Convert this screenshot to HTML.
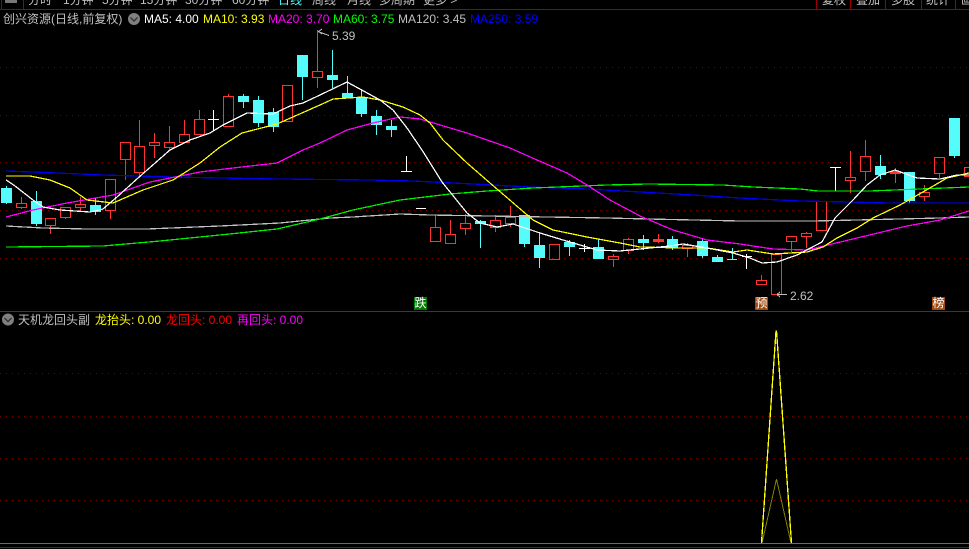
<!DOCTYPE html>
<html lang="zh"><head><meta charset="utf-8"><title>创兴资源</title>
<style>
html,body{margin:0;padding:0;background:#000;width:969px;height:549px;overflow:hidden}
#w{position:relative;width:969px;height:549px;overflow:hidden;background:#000;font:12px/14px "Liberation Sans","WenQuanYi Zen Hei","Noto Sans CJK SC",sans-serif;color:#c0c0c0}
#w span{position:absolute;white-space:nowrap}
.tb{top:-7px}
.r1{top:12px}
.r2{top:313px}
.m{width:13px;height:13px;line-height:13px;text-align:center;color:#fff;top:297px}
svg{position:absolute;left:0;top:0}
</style></head><body><div id="w">
<svg width="969" height="549" viewBox="0 0 969 549" fill="none" shape-rendering="crispEdges">
<g stroke="#a00000"><path d="M0 9.5H969M1.5 0V9M23.5 0V9M816.5 0V9M850.5 0V9M885.5 0V9M921.5 0V9M955.5 0V9"/></g>
<path d="M0 311.5H969" stroke="#c00000"/>
<path d="M0 547.5H969" stroke="#a00000"/>
<g stroke="#7a0000" stroke-dasharray="1 5"><path d="M0 67.5H969M0 115.5H969M0 162.5H969M0 210.5H969M0 258.5H969M0 373.5H969M0 416.5H969M0 458.5H969M0 500.5H969"/></g>
<rect x="5" y="0" width="12" height="3" fill="#777"/>
<g stroke="#ff3232">
<path d="M16.5 203.5h10v4h-10zM21.5 197V203M21.5 208V209
M45.5 218.5h10v7h-10zM50.5 226V234
M60.5 207.5h10v10h-10zM65.5 218V219
M75.5 204.5h10v3h-10zM80.5 197V204M80.5 208V211
M105.5 179.5h10v31h-10zM110.5 211V219
M120.5 142.5h10v17h-10zM125.5 160V180
M134.5 146.5h10v26h-10zM139.5 120V146M139.5 173V178
M149.5 142.5h10v3h-10zM154.5 133V142M154.5 146V158
M164.5 142.5h10v5h-10zM169.5 126V142M169.5 148V150
M179.5 134.5h10v8h-10zM184.5 120V134
M194.5 119.5h10v15h-10zM199.5 110V119
M223.5 96.5h10v30h-10zM228.5 94V96
M282.5 85.5h10v36h-10z
M312.5 71.5h10v6h-10zM317.5 30V71M317.5 78V88
M430.5 227.5h10v14h-10zM435.5 215V227
M445.5 234.5h10v9h-10zM450.5 220V234
M460.5 223.5h10v5h-10zM465.5 214V223M465.5 229V235
M490.5 220.5h10v7h-10zM495.5 215V220M495.5 228V232
M505.5 217.5h10v6h-10zM510.5 206V217M510.5 224V227
M549.5 244.5h10v15h-10z
M608.5 256.5h10v3h-10zM613.5 254V256M613.5 260V267
M623.5 239.5h10v11h-10zM628.5 238V239M628.5 251V254
M682.5 245.5h10v3h-10zM687.5 243V245M687.5 249V257
M756.5 280.5h10v4h-10zM761.5 275V280
M771.5 254.5h10v40h-10z
M786.5 236.5h10v5h-10zM791.5 242V252
M801.5 233.5h10v3h-10zM806.5 232V233M806.5 237V248
M816.5 201.5h10v29h-10z
M845.5 177.5h10v3h-10zM850.5 151V177M850.5 181V193
M860.5 156.5h10v15h-10zM865.5 140V156M865.5 172V181
M919.5 192.5h10v4h-10zM924.5 185V192M924.5 197V201
M934.5 157.5h10v16h-10zM939.5 174V178
M964.5 167.5h10v9h-10z
M658.5 234V243M895.5 168V183"/>
<rect x="653" y="239" width="11" height="3" fill="#ff3232" stroke="none"/>
<rect x="890" y="171" width="11" height="3" fill="#ff3232" stroke="none"/>
</g>
<g fill="#54fcfc">
<path d="M6.5 186V204M36.5 191V226M95.5 198V215M243.5 94V108M258.5 96V127M273.5 108V132M302.5 55V100M332.5 50V88M347.5 76V98M361.5 89V117M376.5 110V135M391.5 120V137M480.5 220V248M524.5 215V247M539.5 232V268M569.5 240V256M598.5 239V259M643.5 235V250M672.5 236V250M702.5 239V258M717.5 255V261M732.5 248V259M880.5 155V179M909.5 172V203M954.5 118V158" stroke="#54fcfc"/>
<path d="M727 259.5H737" stroke="#54fcfc"/>
<rect x="1" y="188" width="11" height="15"/><rect x="31" y="201" width="11" height="23"/><rect x="90" y="205" width="11" height="7"/>
<rect x="238" y="96" width="11" height="6"/><rect x="253" y="100" width="11" height="23"/><rect x="268" y="112" width="11" height="15"/>
<rect x="297" y="55" width="11" height="22"/><rect x="327" y="75" width="11" height="5"/><rect x="342" y="93" width="11" height="5"/>
<rect x="356" y="97" width="11" height="17"/><rect x="371" y="116" width="11" height="9"/><rect x="386" y="126" width="11" height="4"/>
<rect x="475" y="221" width="11" height="3"/><rect x="519" y="215" width="11" height="29"/><rect x="534" y="245" width="11" height="13"/>
<rect x="564" y="242" width="11" height="5"/><rect x="593" y="247" width="11" height="12"/><rect x="638" y="239" width="11" height="4"/>
<rect x="667" y="239" width="11" height="9"/><rect x="697" y="241" width="11" height="15"/><rect x="712" y="257" width="11" height="5"/>
<rect x="875" y="166" width="11" height="9"/><rect x="904" y="172" width="11" height="29"/><rect x="949" y="118" width="11" height="38"/>
</g>
<path stroke="#fff" d="M213.5 110V131M208 119.5H219M406.5 156V172M401 171.5H412M416 208.5H426M584.5 244V252M579 248.5H590M746.5 254V269M742 256.5H752M835.5 167V191M830 167.5H841"/>
<g stroke-linejoin="round" stroke-width="1.25">
<polyline stroke="#0000f0" points="6,171 57,173 103,175 173,177 220,178 280,179 370,180 413,181 473,184 530,187 587,189 640,192 693,195 740,198 800,201 850,202 888,203 969,203"/>
<polyline stroke="#c0c0c0" points="6,226 43,228 87,229 147,229 220,226 280,223 330,218 353,217 400,214 430,215 547,217 607,218 648,219 740,221 813,221 857,220 940,218 969,217"/>
<polyline stroke="#00f000" points="6,247 103,246 160,241 220,235 277,229 320,219 353,210 400,200 450,194 487,191 533,188 607,185 648,184 723,185 753,187 800,189 818,191 870,191 920,189 969,187"/>
<polyline stroke="#ff00ff" points="6,217 33,210 67,203 113,195 150,182 200,172 233,168 277,163 303,150 320,143 347,130 373,123 400,117 420,119 467,133 510,148 537,160 567,173 587,185 610,200 640,216 673,230 707,240 740,244 773,249 807,250 857,238 907,226 940,220 969,211"/>
<polyline stroke="#ffff00" points="6,176 30,176 50,180 70,188 87,200 113,203 143,190 173,180 200,163 220,147 242,133 277,124 320,105 333,99 363,97 380,100 403,107 420,115 430,123 443,140 467,163 490,183 533,220 553,230 587,237 620,243 640,247 680,248 707,248 733,252 747,250 773,254 807,252 823,247 837,238 857,228 873,218 900,205 923,192 947,178 969,173"/>
<polyline stroke="#ffffff" points="6,180 15,186 33,200 43,207 60,210 90,212 103,209 117,197 138,178 170,150 190,140 210,133 223,125 247,113 273,114 290,106 303,103 320,95 347,82 380,100 393,110 407,128 422,150 442,182 467,213 480,223 497,227 513,224 540,233 563,240 597,250 620,251 640,249 670,246 683,244 707,248 733,253 750,258 762,263 777,262 797,255 822,242 835,218 853,200 867,185 880,175 895,170 917,178 940,179 957,175 969,175"/>
</g>
<path stroke="#c0c0c0" d="M318 31.5L329 35.5M318.5 31.5L322 29M318.5 31.5L322 34M777 294.5H787M777 294.5L780 292M777 294.5L780 297"/>
<path stroke="#808000" d="M762 543L776.5 479L791 543"/>
<path stroke="#ffff00" stroke-width="1.3" d="M761.5 543L776 331L776.5 331L791.5 543"/>
<path stroke="#ff00ff" d="M0 543.5H969"/>
<g shape-rendering="auto">
<circle cx="134" cy="19" r="6" fill="#808080"/><path d="M130.5 17.5L134 21L137.5 17.5" stroke="#333" stroke-width="1.4"/>
<circle cx="8" cy="319.500" r="6" fill="#808080"/><path d="M4.500 318L8 321.500L11.500 318" stroke="#333" stroke-width="1.4"/>
</g>
</svg>
<span class="tb" style="left:28px">分时</span><span class="tb" style="left:63px">1分钟</span><span class="tb" style="left:102px">5分钟</span><span class="tb" style="left:140px">15分钟</span><span class="tb" style="left:185px">30分钟</span><span class="tb" style="left:232px">60分钟</span><span class="tb" style="left:278px;color:#54fcfc">日线</span><span class="tb" style="left:312px">周线</span><span class="tb" style="left:347px">月线</span><span class="tb" style="left:379px">多周期</span><span class="tb" style="left:423px">更多 &gt;</span>
<span class="tb" style="left:822px">复权</span><span class="tb" style="left:856px">叠加</span><span class="tb" style="left:891px">多股</span><span class="tb" style="left:926px">统计</span><span class="tb" style="left:961px">画线</span>
<span class="r1" style="left:3px">创兴资源(日线,前复权)</span>
<span class="r1" style="left:144px;color:#fff">MA5: 4.00</span>
<span class="r1" style="left:203px;color:#ff0">MA10: 3.93</span>
<span class="r1" style="left:268px;color:#f0f">MA20: 3.70</span>
<span class="r1" style="left:333px;color:#0f0">MA60: 3.75</span>
<span class="r1" style="left:398px;color:#c0c0c0">MA120: 3.45</span>
<span class="r1" style="left:470px;color:#00f">MA250: 3.59</span>
<span style="left:332px;top:29px">5.39</span>
<span style="left:790px;top:289px">2.62</span>
<span class="r2" style="left:18px">天机龙回头副</span>
<span class="r2" style="left:95px;color:#ff0">龙抬头: 0.00</span>
<span class="r2" style="left:166px;color:#f00">龙回头: 0.00</span>
<span class="r2" style="left:237px;color:#f0f">再回头: 0.00</span>
<span class="m" style="left:414px;background:#007a00">跌</span>
<span class="m" style="left:755px;background:#a04a10">预</span>
<span class="m" style="left:932px;background:#a04a10">榜</span>
</div></body></html>
